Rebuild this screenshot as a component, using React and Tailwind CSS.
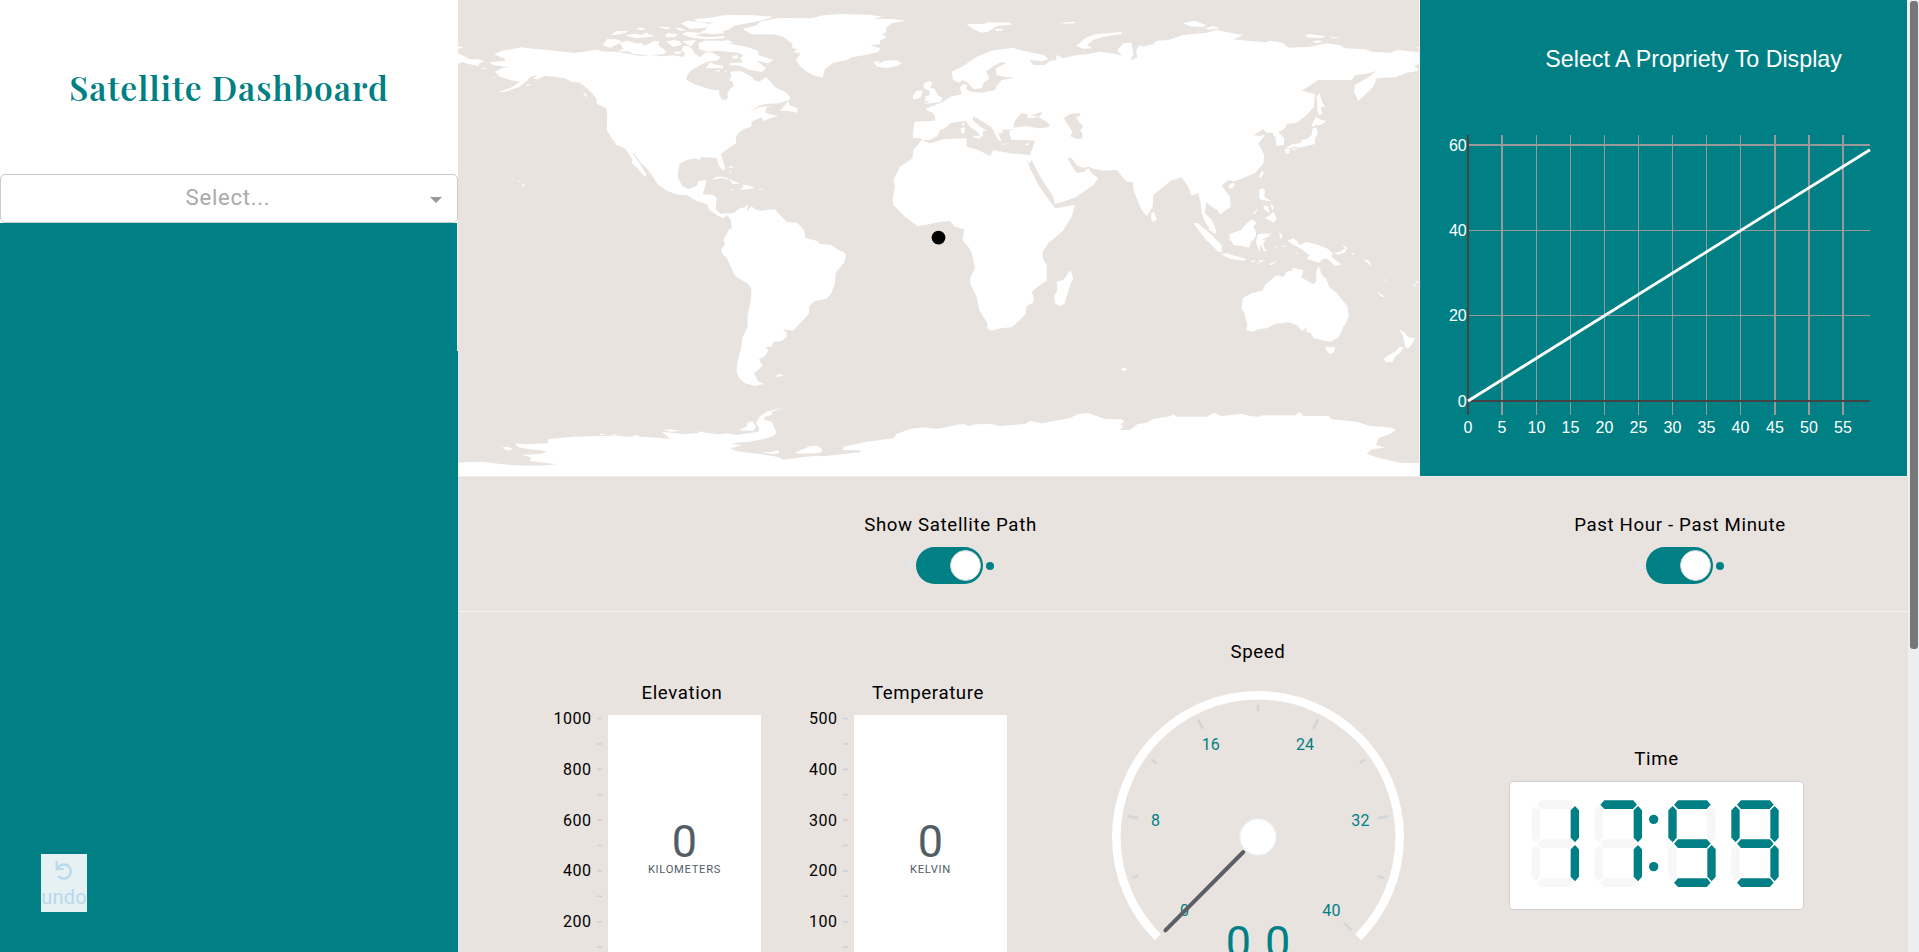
const LAND_WEST = [
  // North America and the top of South America
  "M132 163L155 152 185 148 215 142 250 146 290 150 330 154 370 159 400 155 420 152 442 149 455 154 490 155 515 158 550 164 575 168 600 165 640 169 670 166 700 171 705 163 695 150 700 138 715 138 728 148 732 160 750 172 765 158 785 157 800 165 812 172 800 182 775 184 755 193 740 202 722 212 712 225 708 238 720 246 740 255 770 265 795 271 808 271 808 285 815 297 827 301 834 292 832 280 838 270 851 258 848 246 838 240 845 228 840 215 870 213 890 222 905 230 912 240 928 245 948 230 962 245 975 262 1005 275 1020 290 1018 300 985 310 945 312 925 318 900 336 930 321 968 318 950 322 945 335 955 342 985 347 960 355 940 363 935 352 905 365 903 380 880 388 865 400 858 412 858 430 835 445 813 462 818 480 826 505 820 512 807 498 800 475 780 472 750 472 750 480 735 475 710 480 690 490 685 510 684 535 697 558 715 567 740 558 745 543 770 541 765 560 758 583 790 585 800 595 797 628 812 641 850 640 870 625 885 622 895 613 890 636 904 619 915 628 930 632 975 628 990 645 1010 665 1040 668 1055 680 1065 705 1062 713 1090 722 820 722 835 700 845 685 843 660 832 645 820 655 800 645 778 630 770 612 740 603 710 585 685 584 650 572 622 552 615 540 600 517 570 485 552 460 548 460 570 492 590 525 582 528 565 508 545 488 548 480 525 445 500 435 485 415 470 390 472 340 468 325 440 310 440 297 425 278 405 260 390 248 365 245 345 235 320 232 285 227 265 238 250 236 262 224 240 232 228 245 205 262 165 275 145 277 185 262 210 245 190 242 165 235 150 230 135 215 155 205 175 202 130 195 120 187 165 182 165 177Z",
  // Chukotka
  "M24 160L60 178 85 177 103 184 85 191 88 199 60 193 35 186 24 192ZM24 139L42 142 24 146ZM90 203L113 206 100 208ZM126 231L140 231 132 234ZM228 253L246 252 232 258Z",
  // Canadian Arctic islands
  "M458 135L472 117 500 118 516 126 480 143ZM482 104L500 94 535 92 528 98 495 105ZM500 155L520 147 510 130 530 122 560 130 575 128 580 137 600 130 610 122 628 124 625 135 650 155 640 162 600 166 550 162 535 153ZM525 106L555 102 575 105 590 97 600 104 617 108 590 112 560 115ZM558 88L570 82 586 86 580 91ZM620 80L640 80 665 84 655 88ZM645 105L655 99 683 103 675 111 650 112ZM648 125L670 120 690 124 694 135 670 141ZM670 155L695 154 690 162 675 161ZM674 83L690 83 710 92 690 92ZM692 70L715 62 745 65 775 72 765 84 720 86ZM695 102L712 95 760 100 735 106 770 112 825 108 820 115 770 118 720 112ZM697 124L738 120 725 138 715 136Z",
  "M732 58L790 52 820 46 900 45 970 50 940 60 900 68 850 78 840 86 815 96 825 100 790 103 750 98 770 86 770 72 795 68 745 66Z",
  "M745 130L765 122 810 122 835 130 860 135 890 140 925 153 925 165 970 180 955 190 920 182 948 205 935 216 900 210 865 196 838 196 840 190 880 187 870 175 880 165 865 158 830 155 800 152 770 155 748 148ZM815 123L835 121 850 128 830 130ZM767 205L780 187 800 195 818 197 820 205ZM845 172L860 165 865 174 852 176ZM795 212L808 209 810 216ZM822 215L830 212 828 219Z",
  // Greenland and Iceland
  "M880 86L920 76 930 65 985 54 1085 55 1120 46 1170 42 1260 44 1297 50 1270 56 1330 57 1367 62 1325 70 1308 84 1308 97 1296 103 1310 112 1290 122 1290 133 1262 136 1290 145 1285 156 1245 165 1205 172 1190 180 1150 188 1125 208 1118 233 1095 228 1070 215 1050 198 1037 180 1052 161 1030 155 1045 148 1028 145 1025 130 1000 110 970 103 905 103 885 92Z",
  "M1270 187L1290 182 1283 192 1305 182 1340 181 1355 190 1345 197 1312 204 1282 200Z",
  // British Isles
  "M1388 288L1400 272 1418 272 1412 293 1390 299ZM1420 250L1440 243 1448 250 1440 262 1455 268 1465 288 1478 293 1472 306 1420 312 1440 304 1422 303 1430 295 1422 290 1440 285 1438 272 1422 265Z",
  // Newfoundland and Vancouver Island
  "M990 332L1005 315 1015 302 1018 315 1042 325 1042 338 1020 334ZM398 280L408 280 412 294ZM436 308L465 318 485 332 455 318Z",
  // Caribbean and Hawaii
  "M785 540L800 530 820 530 850 543 872 551 848 552 838 540 815 534ZM868 570L880 562 878 553 900 557 915 565 895 567ZM838 567L854 568 845 571ZM926 566L942 567 928 570ZM832 500L848 498 848 505ZM838 512L846 520 840 520ZM215 552L225 555 220 561ZM184 535L190 537 186 540ZM198 540L215 546 205 545Z",
];

const LAND_SOUTH_WEST = [
  // South America
  "M838 -3L820 30 825 42 813 60 820 75 830 83 855 138 895 162 904 175 903 210 893 255 893 290 877 325 872 360 862 395 860 425 868 445 885 460 915 468 943 462 925 455 912 430 938 408 927 388 945 378 955 362 947 352 966 350 970 335 995 333 1010 320 1010 308 998 298 1030 302 1045 285 1062 268 1077 250 1078 228 1095 213 1130 206 1145 188 1155 160 1157 128 1182 98 1188 75 1180 65 1165 60 1145 45 1110 42 1100 32 1065 24 1065 10 1060 -3Z",
  "M976 438L988 432 1002 436 985 441Z",
  // Antarctica
  "M24 698L60 696 100 695 150 702 190 706 270 707 320 703 240 693 243 682 212 674 270 672 292 664 240 658 205 652 196 640 220 643 292 640 296 627 370 620 480 617 545 620 555 614 575 621 600 622 660 626 635 605 700 612 745 609 752 604 770 609 810 613 830 610 860 615 925 605 928 595 918 578 928 560 950 545 1008 530 965 545 967 554 945 560 940 568 965 576 980 608 970 618 950 625 900 635 848 640 850 643 877 646 840 655 862 664 930 672 980 680 1000 689 1060 681 1100 677 1120 679 1160 674 1230 667 1230 661 1180 660 1180 650 1250 635 1330 625 1340 612 1380 597 1420 592 1440 595 1465 596 1530 583 1545 583 1558 589 1575 583 1620 582 1650 588 1725 582 1740 573 1775 580 1860 564 1885 552 1912 549 1925 553 1965 567 2015 568 2024 576 2010 582 2020 588 2010 600 2040 600 2062 583 2090 578 2110 567 2160 559 2170 553 2180 560 2270 560 2292 548 2315 558 2375 551 2400 558 2425 560 2440 556 2535 556 2550 546 2560 558 2635 558 2645 568 2720 575 2760 588 2820 592 2838 599 2820 612 2785 625 2778 645 2804 653 2765 658 2750 671 2780 682 2850 698 2907 699 2907 739 24 739Z",
  "M155 653L170 650 190 657 175 662ZM446 610L470 613 455 615ZM483 613L512 615 490 617ZM637 601L660 598 693 602 665 605ZM865 600L890 590 893 577 908 574 918 590 910 603ZM935 667L965 666 985 660 988 670 965 672ZM1033 668L1060 658 1080 648 1105 648 1118 660 1110 669 1050 671Z",
];

const LAND_EAST = [
  // Eurasia and northern Africa
  "M-47 365L15 362 15 350 8 338 -12 330 -10 325 0 320 10 318 45 302 60 290 95 283 90 262 100 252 112 255 108 268 125 276 155 278 195 270 200 258 215 240 255 233 220 230 200 225 197 205 228 190 215 186 190 198 168 215 178 235 160 250 155 265 130 268 115 250 100 240 85 248 68 238 66 215 100 198 140 170 185 152 250 143 270 150 340 165 355 178 335 184 298 180 310 195 345 195 360 183 378 180 380 165 400 175 440 165 470 163 510 155 560 162 575 168 562 150 580 130 605 128 610 165 600 182 622 172 618 150 630 135 640 140 670 132 680 122 715 120 760 105 830 98 860 90 900 98 940 105 910 118 960 123 1010 127 1020 122 1058 128 1075 143 1140 140 1190 130 1230 136 1245 145 1305 148 1325 155 1380 158 1400 150 1467 157 1467 192 1452 197 1463 206 1463 213 1430 218 1395 232 1340 235 1330 260 1310 280 1285 303 1272 275 1275 255 1310 235 1340 213 1310 222 1275 225 1265 240 1165 240 1115 272 1155 282 1152 320 1130 345 1100 368 1070 372 1065 385 1045 397 1062 415 1062 435 1040 437 1036 412 1028 405 1030 398 1010 398 1000 388 970 405 985 408 1005 405 985 430 1003 465 1000 490 975 520 930 538 910 545 900 540 888 545 875 558 900 590 902 620 870 643 862 630 845 620 828 607 825 640 845 660 855 680 860 702 845 695 825 665 815 640 812 610 805 580 785 587 775 560 755 532 722 543 670 585 668 620 650 648 635 630 612 575 608 545 590 545 560 510 520 512 485 505 478 500 460 503 440 495 425 475 412 474 430 505 440 518 462 516 475 503 485 520 505 535 490 555 440 590 400 605 375 612 370 590 340 545 325 520 305 480 298 492 288 475 300 505 325 555 350 590 375 625 435 615 425 650 400 690 365 722 100 722 103 688 75 680 60 663 30 665 0 672 -38 678 -75 650 -110 615 -112 595 -105 560 -110 540 -90 500 -52 475 -50 450 -25 420 0 430 40 418 110 415 110 440 145 450 180 468 190 450 240 460 300 465 315 422 285 420 245 420 238 400 240 390 255 387 215 390 220 398 205 400 215 425 205 420 185 382 150 360 130 348 128 360 150 380 172 392 160 392 158 408 150 412 145 398 120 380 107 362 85 365 60 370 45 385 30 390 22 408 0 420 -20 420 -35 414 -52 415 -50 390Z",
  // Mediterranean islands
  "M127 409L150 407 148 417 130 412ZM92 384L104 382 104 400 94 400ZM95 370L102 368 101 381ZM213 431L237 431 220 434ZM285 432L300 429 292 437Z",
  // Arctic islands
  "M110 72L160 72 175 67 240 68 245 74 200 78 175 95 155 98 130 88ZM193 87L215 86 222 91 200 93ZM387 69L430 65 438 69 405 71ZM438 138L465 115 495 103 575 96 575 102 520 110 490 120 472 135 487 145 460 146ZM758 69L795 62 828 75 820 82 780 79ZM825 84L850 78 870 85 835 89ZM1123 106L1140 102 1187 109 1175 114 1135 113ZM1198 110L1232 112 1210 115ZM1148 125L1165 121 1178 126 1160 129ZM1458 142L1467 142 1467 147Z",
  // Sakhalin, Japan, Taiwan, Hainan, Sri Lanka
  "M1160 290L1168 278 1176 305 1185 320 1172 322 1178 342 1167 345 1162 330ZM1158 350L1175 360 1190 362 1172 375 1155 375 1152 382 1145 375ZM1148 385L1160 383 1163 400 1155 415 1155 432 1130 438 1110 443 1095 440 1080 445 1066 445 1085 433 1110 430 1118 418 1130 418 1145 405ZM1063 448L1080 447 1078 460 1070 462ZM1086 447L1105 443 1090 452ZM987 530L997 510 1001 520 992 535ZM895 558L908 548 915 556 902 567ZM664 640L672 636 681 658 670 666 663 655Z",
  // Philippines and Indonesia
  "M988 570L998 564 1005 572 1003 590 1025 605 1010 602 988 598ZM1000 615L1015 620 1018 640 1003 628ZM1020 612L1032 620 1028 632ZM1003 655L1020 645 1030 635 1040 655 1032 668 1018 660ZM965 644L985 624 978 638ZM790 670L805 670 825 690 850 708 858 722 830 722ZM900 722L898 706 925 702 945 675 965 657 980 668 970 680 978 706 970 722ZM985 710L1025 703 1010 712 990 722 984 722ZM1048 698L1057 705 1052 718Z",
];

const WATER_EAST = [
  "M250 383L255 362 275 340 290 342 294 355 312 354 322 350 345 362 360 375 355 382 325 385 290 378Z",
  "M304 346L337 335 330 350Z",
  "M402 353L420 342 450 340 452 347 438 350 447 365 460 380 450 392 457 400 457 416 440 417 420 408 428 398 418 380 407 365Z",
];

const LAND_SOUTH_EAST = [
  // Southern Africa and Madagascar
  "M104 -3L97 30 118 55 125 68 130 90 135 115 120 145 122 165 140 200 148 240 172 280 172 296 185 302 210 295 245 292 270 270 287 252 290 228 310 218 312 205 305 185 330 165 350 153 350 105 338 85 338 65 360 32 402 -3Z",
  "M422 120L430 148 424 155 403 222 390 228 376 222 372 200 382 180 380 155 400 150Z",
  // Indonesia
  "M808 -3L825 -3 875 45 875 68 865 65 835 35ZM833 -3L858 -3 858 12ZM872 72L890 70 925 80 950 88 940 92 900 86ZM960 92L978 92 970 97ZM985 90L1008 92 990 97ZM980 98L992 102 985 103ZM1015 103L1045 90 1025 105ZM898 15L905 10 925 3 945 -3 975 -3 978 12 965 30 958 53 930 47 910 45ZM984 12L1028 10 1000 18 992 22 995 30 1010 28 1000 38 1003 55 1013 65 1000 62 992 42 988 66 983 50 978 35ZM1048 8L1057 15 1050 28ZM1036 48L1045 50 1038 53ZM1050 47L1072 48 1060 51ZM1100 66L1106 70 1102 76Z",
  "M1073 32L1090 25 1103 35 1108 45 1130 36 1165 45 1195 57 1210 72 1202 78 1235 105 1215 107 1190 85 1177 88 1168 98 1150 92 1130 88 1138 75 1105 52 1085 42ZM1213 68L1230 65 1245 55 1235 43 1252 53 1245 67 1225 74ZM1263 64L1275 76 1268 74ZM1280 77L1292 82ZM1298 88L1318 92 1325 108 1312 98ZM1360 143L1370 155 1364 152ZM1340 183L1364 200 1355 201ZM1447 165L1457 163 1455 170ZM1455 155L1467 153 1460 159Z",
  // Australia, Tasmania, New Zealand
  "M938 205L965 190 998 182 1005 165 1020 152 1038 136 1060 140 1070 125 1090 120 1085 113 1120 120 1113 142 1150 163 1158 155 1160 120 1167 108 1175 135 1188 145 1198 172 1220 188 1235 208 1252 228 1256 255 1250 275 1240 290 1225 323 1200 335 1175 330 1150 325 1143 310 1128 305 1132 290 1117 303 1100 285 1075 277 1035 282 1010 295 985 298 968 305 948 300 952 285 943 250 935 235Z",
  "M1185 350L1200 352 1215 350 1212 367 1200 373 1190 362ZM1408 298L1425 308 1435 322 1455 325 1450 335 1435 356 1425 350 1420 322ZM1360 388L1375 376 1395 365 1408 350 1422 352 1410 368 1395 380 1388 396 1370 397ZM576 412L591 417 588 422 576 422Z",
];

function Shapes({ paths, fill = "white" }) {
  return paths.map((d, i) => <path key={i} d={d} fill={fill} />);
}

function WorldMap() {
  return (
    <svg className="block h-[476px] w-[961px] shrink-0" viewBox="0 0 961 476">
      <g transform="translate(-8 0) scale(.33333)"><Shapes paths={LAND_WEST} /></g>
      <g transform="translate(-8 230) scale(.33333)"><Shapes paths={LAND_SOUTH_WEST} /></g>
      <g transform="translate(472 0) scale(.33333)">
        <Shapes paths={LAND_EAST} />
        <Shapes paths={WATER_EAST} fill="#e8e3df" />
      </g>
      <g transform="translate(472 230) scale(.33333)"><Shapes paths={LAND_SOUTH_EAST} /></g>
      <circle cx="480.5" cy="237.6" r="6.9" fill="black" />
    </svg>
  );
}

const X_TICKS = [[0, 48], [5, 82], [10, 116.5], [15, 150.5], [20, 184.5], [25, 218.5], [30, 252.5], [35, 286.5], [40, 320.5], [45, 355], [50, 389], [55, 423]];
const THICK = [5, 45, 50, 55];

function LineChart() {
  return (
    <svg className="block h-[476px] w-[487px]" viewBox="0 0 487 476" fontFamily="Liberation Sans, Arial, sans-serif" fill="white">
      <text x="273.6" y="66.7" fontSize="23.2" textAnchor="middle" textLength="296.5" lengthAdjust="spacingAndGlyphs">Select A Propriety To Display</text>
      <g stroke="#999" strokeWidth="1">
        {X_TICKS.slice(1).map(([v, x]) => (
          <path key={v} d={`M${x} 135V415`} strokeWidth={THICK.includes(v) ? 2 : 1} />
        ))}
        <path d="M48 145H450" strokeWidth="2" />
        <path d="M48 230.5H450M48 315.5H450" />
      </g>
      <path d="M48 135V415M48 401H450" stroke="#444" strokeWidth="2" fill="none" />
      <path d="M48 401L450 149.7" stroke="white" strokeWidth="2.8" fill="none" />
      <g fontSize="16">
        {X_TICKS.map(([v, x]) => (
          <text key={v} x={x} y="433" textAnchor="middle">{v}</text>
        ))}
        <text x="46.7" y="151" textAnchor="end">60</text>
        <text x="46.7" y="236" textAnchor="end">40</text>
        <text x="46.7" y="321" textAnchor="end">20</text>
        <text x="46.7" y="407" textAnchor="end">0</text>
      </g>
    </svg>
  );
}

function Toggle({ label }) {
  return (
    <div className="flex flex-col items-center">
      <span className="text-[18.67px] leading-6 tracking-[0.65px] whitespace-nowrap">{label}</span>
      <div className="mt-[10px] flex items-center gap-[3px]">
        <span className="size-[7px] rounded-full bg-[#e4e6ea]" />
        <span className="flex h-[37px] w-[67px] items-center justify-end rounded-full bg-[#007f84] pr-[2px]">
          <span className="size-[31px] rounded-full border border-[#ccd4d4] bg-white" />
        </span>
        <span className="size-[8px] rounded-full bg-[#007f84]" />
      </div>
    </div>
  );
}

function Tank({ label, unit, values }) {
  return (
    <div className="flex w-[221px] flex-col">
      <div className="pr-[5px] pl-[68px] text-center text-[18.67px] leading-6 tracking-[0.6px]">{label}</div>
      <div className="mt-[10px] flex">
        <div className="flex w-[51.5px] flex-col items-end pt-px text-[16px] tracking-[0.5px]">
          {values.map((v) => (
            <div key={v} className="-mt-[9px] mb-[35.8px] h-[24px] leading-6 whitespace-nowrap">{v}</div>
          ))}
        </div>
        <svg className="ml-[5.5px] h-[240px] w-[5px]" viewBox="0 0 5 240">
          {Array.from({ length: 10 }, (_, i) => (
            <path key={i} d={`M0 ${3.5 + i * 25.4}h5`} stroke="#d0d0d0" strokeWidth="1.5" />
          ))}
        </svg>
        <div className="ml-[6px] flex h-[260px] w-[153px] flex-col items-center bg-white pt-[99px] text-[#535d66]">
          <span className="text-[45px] leading-[56px]">0</span>
          <span className="-mt-[8px] text-[11.2px] leading-[16px] tracking-[0.7px]">{unit}</span>
        </div>
      </div>
    </div>
  );
}

function polar(r, deg) {
  const a = (deg * Math.PI) / 180;
  return [(150 + r * Math.sin(a)).toFixed(2), (150 - r * Math.cos(a)).toFixed(2)];
}

function SpeedGauge() {
  const ticks = Array.from({ length: 11 }, (_, i) => i);
  return (
    <svg className="block h-[300px] w-[300px]" viewBox="0 0 300 300" fontFamily="Roboto, sans-serif">
      <path d="M49.8 250.2A141.7 141.7 0 1 1 250.2 250.2" fill="none" stroke="white" strokeWidth="8.6" />
      {ticks.map((i) => {
        const deg = -135 + 27 * i;
        const [x1, y1] = polar(131, deg);
        const [x2, y2] = polar(i % 2 ? 127 : 122.5, deg);
        return <path key={i} d={`M${x1} ${y1}L${x2} ${y2}`} stroke="#d3d5d7" strokeWidth="2.7" strokeLinecap="round" />;
      })}
      <g fill="#007f84" fontSize="16" letterSpacing="0.2" textAnchor="middle">
        {ticks.filter((i) => i % 2 === 0).map((i) => {
          const [x, y] = polar(103.8, -135 + 27 * i);
          return <text key={i} x={x} y={+y + 5.4}>{i * 4}</text>;
        })}
        <text x="150.5" y="270.7" fontSize="45" letterSpacing="1">0.0</text>
      </g>
      <path d="M135.3 165L57.4 243.3" stroke="#5b6067" strokeWidth="4" strokeLinecap="round" />
      <circle cx="150" cy="150" r="18.4" fill="white" stroke="#e8eaed" strokeWidth="1.5" />
    </svg>
  );
}

const H = "M17 13L29 0H116L127 13 115 26H29Z";
const V = "M0 30L13 17 25 30V112L13 126 0 112Z";
const SEGMENTS = [[H, 0, 0], [V, 117, 0], [V, 117, 117], [H, 0, 234], [V, 0, 117], [V, 0, 0], [H, 0, 117]];
const DIGITS = [[156, [1, 2]], [345, [0, 1, 2]], [566, [0, 5, 6, 2, 3]], [755, [0, 1, 5, 6, 2, 3]]];

function Clock() {
  return (
    <div className="h-[129px] w-[295px] rounded-[4px] border border-[#d0d0d0] bg-white">
      <svg className="block h-[127px] w-[293px]" viewBox="91 906 879 381">
        {DIGITS.map(([x, on]) => (
          <g key={x} transform={`translate(${x} 961)`}>
            {SEGMENTS.map(([d, dx, dy], i) => (
              <path key={i} d={d} transform={`translate(${dx} ${dy})`} fill={on.includes(i) ? "#007f84" : "#f7f7f7"} />
            ))}
          </g>
        ))}
        <circle cx="522" cy="1018" r="14" fill="#007f84" />
        <circle cx="522" cy="1160" r="14" fill="#007f84" />
      </svg>
    </div>
  );
}

function Sidebar() {
  return (
    <aside className="flex h-full w-[458px] shrink-0 flex-col bg-[#007f84]">
      <header className="flex h-[174px] items-center justify-center bg-white">
        <h1 className="font-['Playfair_Display','Liberation_Serif',serif] text-[33.6px] leading-[48px] font-semibold tracking-[1px] whitespace-nowrap text-[#007f84]">Satellite Dashboard</h1>
      </header>
      <div className="bg-white">
        <div className="flex h-[49px] items-center rounded-[5px] border border-[#ccc] bg-white pr-[15px]">
          <span className="flex-1 pb-[2px] pl-[25px] text-center text-[22.2px] tracking-[0.7px] text-[#aaa]">Select...</span>
          <svg className="mt-[3px] h-[6px] w-[12px]" viewBox="0 0 12 6"><path d="M0 0H12L6 6Z" fill="#999" /></svg>
        </div>
      </div>
      <div className="h-[128px] border-r border-[#e8f2f2]" />
      <div className="mt-[503px] ml-[41px] flex h-[58px] w-[46px] flex-col items-center bg-[#e6f1f4] text-[#b8d8ee]">
        <svg className="mt-[6px] h-[22px] w-[22px]" viewBox="157 119 66 66" fill="none" stroke="currentColor" strokeWidth="6.5">
          <path d="M168 123V146H189M170 144C178 134 184 132 190 132A21.5 21.5 0 1 1 173 168" />
        </svg>
        <span className="mt-px text-[20px] leading-[28px] tracking-[0.2px]">undo</span>
      </div>
    </aside>
  );
}

export default function App() {
  return (
    <div className="flex h-[952px] w-[1919px] overflow-hidden bg-[#e8e3df] font-['Roboto',sans-serif] text-black">
      <Sidebar />
      <main className="flex w-[1450px] shrink-0 flex-col">
        <section className="flex h-[477px] border-b border-[#f0eeed]">
          <WorldMap />
          <div className="w-[488px] border-l border-[#f0f4f4] bg-[#007f84]"><LineChart /></div>
          <div className="w-px bg-[#eee]" />
        </section>
        <section className="flex h-[135px] border-b border-[#f4f1ef] pt-[36px]">
          <div className="flex w-[985px] shrink-0 justify-center"><Toggle label="Show Satellite Path" /></div>
          <div className="flex grow justify-center pl-[9px]"><Toggle label="Past Hour - Past Minute" /></div>
        </section>
        <section className="flex h-[340px] items-start overflow-hidden pl-[82px]">
          <div className="flex gap-[25px] pt-[69px]">
            <Tank label="Elevation" unit="KILOMETERS" values={[1000, 800, 600, 400, 200]} />
            <Tank label="Temperature" unit="KELVIN" values={[500, 400, 300, 200, 100]} />
          </div>
          <div className="ml-[101px] flex w-[300px] flex-col items-center pt-[28px]">
            <span className="text-[18.67px] leading-6 tracking-[0.6px]">Speed</span>
            <div className="mt-[23px]"><SpeedGauge /></div>
          </div>
          <div className="ml-[101px] flex w-[295px] flex-col items-center pt-[135px]">
            <span className="mb-[10px] text-[18.67px] leading-6 tracking-[0.7px]">Time</span>
            <Clock />
          </div>
        </section>
      </main>
      <div className="flex w-[11px] flex-col items-center bg-[#eee] pt-px">
        <div className="h-[648px] w-[8px] rounded-[3px] bg-[#777]" />
      </div>
    </div>
  );
}
